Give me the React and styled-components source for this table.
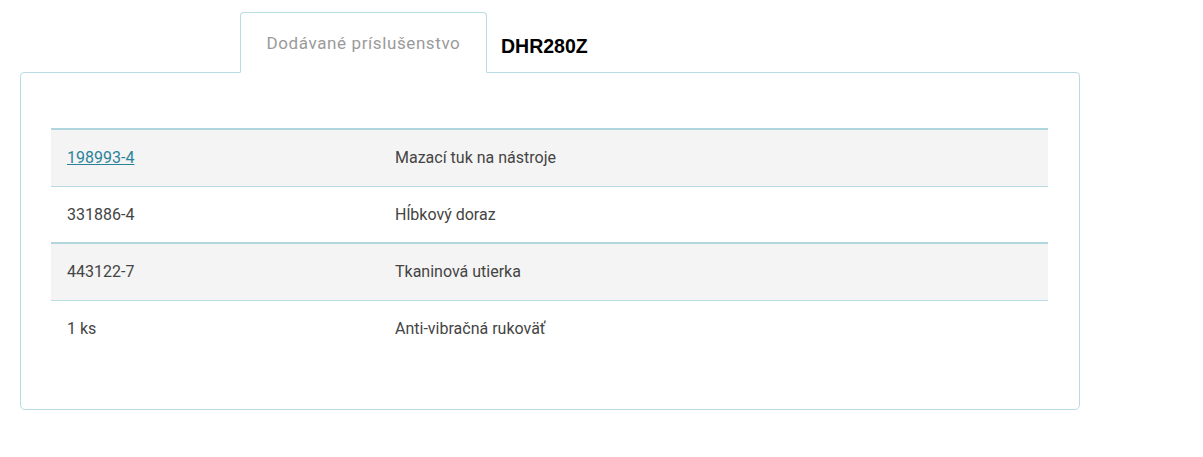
import styled, { createGlobalStyle } from "styled-components"

const GlobalStyle = createGlobalStyle`
    body {
        margin: 0;
        background: #fff;
        font-family: Roboto, "Noto Sans", sans-serif;
    }
`

const rows = [
    { code: "198993-4", name: "Mazací tuk na nástroje", link: true },
    { code: "331886-4", name: "Hĺbkový doraz" },
    { code: "443122-7", name: "Tkaninová utierka" },
    { code: "1 ks", name: "Anti-vibračná rukoväť" },
]

export default function App () {
    return (
        <>
            <GlobalStyle />
            <Wrapper>
                <TabBar>
                    <Tab>Dodávané príslušenstvo</Tab>
                    <Model>DHR280Z</Model>
                </TabBar>
                <Panel>
                    <Table>
                        <tbody>
                            {rows.map((row, index) => (
                                <Row key={row.code} $striped={index % 2 === 0}>
                                    <CodeCell>
                                        {row.link ? <a href="#">{row.code}</a> : row.code}
                                    </CodeCell>
                                    <Cell>{row.name}</Cell>
                                </Row>
                            ))}
                        </tbody>
                    </Table>
                </Panel>
            </Wrapper>
        </>
    )
}

const Wrapper = styled.div`
    width: 1060px;
    padding: 12px 0 0 20px;
`

const TabBar = styled.div`
    display: flex;
    align-items: center;
    padding-left: 220px;
    margin-bottom: -1px;
    position: relative;
    z-index: 1;
`

const Tab = styled.div`
    width: 247px;
    height: 61px;
    box-sizing: border-box;
    display: flex;
    align-items: center;
    justify-content: center;
    border: 1px solid #b9dce2;
    border-bottom-color: #fff;
    border-radius: 4px 4px 0 0;
    background: #fff;
    color: #9a9a9a;
    font-size: 17px;
    letter-spacing: 0.6px;
`

const Model = styled.div`
    margin-left: 14px;
    margin-top: 7px;
    font-family: Arial, "Liberation Sans", sans-serif;
    font-weight: bold;
    font-size: 19.5px;
    color: #000;
`

const Panel = styled.div`
    box-sizing: border-box;
    width: 1060px;
    height: 338px;
    border: 1px solid #b9dce2;
    border-radius: 4px 4px 5px 5px;
    padding: 55px 31px 0 30px;
`

const Table = styled.table`
    width: 997px;
    table-layout: fixed;
    border-collapse: collapse;
    font-size: 16px;
    color: #444;
`

const Row = styled.tr`
    height: 57px;
    background: ${p => p.$striped ? "#f4f4f4" : "#fff"};
    border-top: ${p => p.$striped ? "2px solid #b0d7de" : "none"};
    border-bottom: ${p => p.$striped ? "1px solid #b9dce2" : "none"};
`

const Cell = styled.td`
    padding: 0 16px;
    vertical-align: middle;
`

const CodeCell = styled(Cell)`
    width: 296px;

    a {
        color: #2b8399;
        text-decoration: underline;
    }
`
